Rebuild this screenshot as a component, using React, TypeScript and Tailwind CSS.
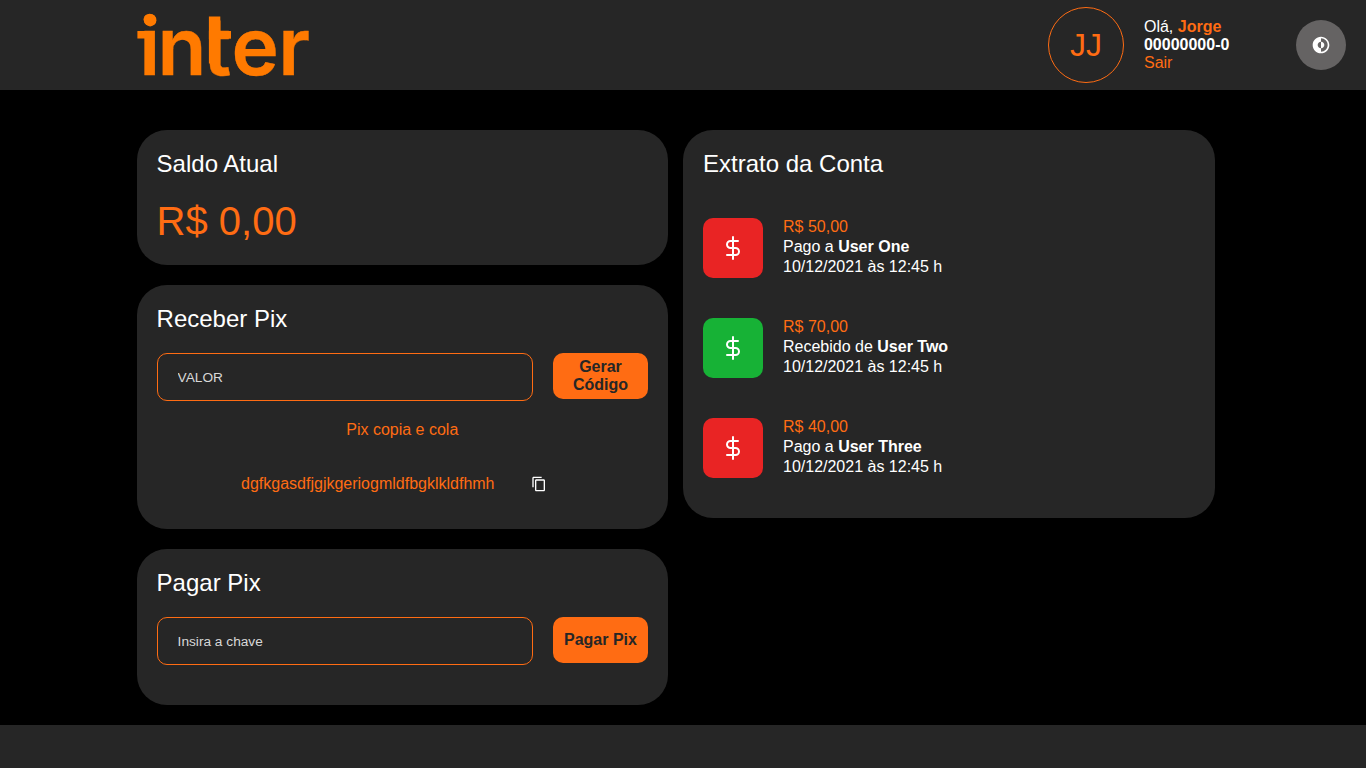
import React from "react";
import { FiDollarSign } from "react-icons/fi";
import { MdContentCopy } from "react-icons/md";
import { CgDarkMode } from "react-icons/cg";

const entries = [
  { value: "R$ 50,00", action: "Pago a", user: "User One", date: "10/12/2021 às 12:45 h", received: false },
  { value: "R$ 70,00", action: "Recebido de", user: "User Two", date: "10/12/2021 às 12:45 h", received: true },
  { value: "R$ 40,00", action: "Pago a", user: "User Three", date: "10/12/2021 às 12:45 h", received: false },
];

function Logo() {
  return (
    <svg width="180" height="90" viewBox="0 0 180 90" fill="#ff7a00" className="overflow-visible">
      <text
        x="2.3 20.4 65.9 94.6 141.2"
        y="75"
        fontFamily="Inter, sans-serif"
        fontWeight="600"
        fontSize="80"
        stroke="#ff7a00"
        strokeWidth="0.4"
      >
        inter
      </text>
      <rect x="66" y="27" width="5.9" height="16" fill="#262626" />
      <rect x="71.9" y="16.5" width="11.4" height="47" />
      <rect x="80" y="31" width="14" height="7.7" />
      <circle cx="13.2" cy="20.2" r="6.2" />
      <rect x="0.4" y="31" width="12" height="7.5" />
    </svg>
  );
}

function Card({ title, className, children }: { title: string; className: string; children: React.ReactNode }) {
  return (
    <section className={`rounded-[30px] bg-[#262626] p-5 ${className}`}>
      <h2 className="text-2xl leading-[27px]">{title}</h2>
      {children}
    </section>
  );
}

function Field({ placeholder, label }: { placeholder: string; label: string }) {
  return (
    <div className="mt-[21px] flex gap-5">
      <input
        placeholder={placeholder}
        className="h-12 min-w-0 flex-1 rounded-[10px] border border-[#ff6c13] bg-transparent px-5 text-[13.7px] placeholder:text-[#d8d8d8]"
      />
      <button className="h-[46px] w-[95px] rounded-[10px] bg-[#ff6c13] text-base leading-[18px] font-bold text-[#262626]">
        {label}
      </button>
    </div>
  );
}

export default function App() {
  return (
    <div className="flex h-screen flex-col overflow-hidden bg-black font-['Liberation_Sans',Arial,sans-serif] text-base text-white">
      <header className="relative h-[90px] shrink-0 bg-[#262626]">
        <div className="mx-auto flex h-full w-4/5 items-center justify-between">
          <Logo />
          <div className="flex items-center gap-5">
            <div className="flex size-[76px] items-center justify-center rounded-full border border-[#ff6c13] text-[32px] leading-none text-[#ff6c13]">
              JJ
            </div>
            <div className="leading-[18px]">
              <p>
                Olá, <strong className="text-[#ff6c13]">Jorge</strong>
              </p>
              <p className="font-bold">00000000-0</p>
              <a className="block text-[#ff6c13]">Sair</a>
            </div>
          </div>
        </div>
        <button className="absolute top-5 right-5 flex size-[50px] items-center justify-center rounded-full bg-[#656363]">
          <CgDarkMode size={20} />
        </button>
      </header>

      <main className="mx-auto grid w-4/5 shrink-0 grid-cols-2 items-start pt-10 pb-5">
        <div className="mr-[15px] flex flex-col gap-5">
          <Card title="Saldo Atual" className="h-[135px]">
            <p className="mt-[21px] text-[40px] leading-[46px] text-[#ff6c13]">R$ 0,00</p>
          </Card>
          <Card title="Receber Pix" className="h-[244px]">
            <Field placeholder="VALOR" label="Gerar Código" />
            <p className="mt-5 text-center leading-[18px] text-[#ff6c13]">Pix copia e cola</p>
            <div className="mt-9 flex items-center justify-center pr-[17px]">
              <span className="leading-[18px] text-[#ff6c13]">dgfkgasdfjgjkgeriogmldfbgklkldfhmh</span>
              <MdContentCopy size={16} className="ml-9" />
            </div>
          </Card>
          <Card title="Pagar Pix" className="h-[156px]">
            <Field placeholder="Insira a chave" label="Pagar Pix" />
          </Card>
        </div>

        <Card title="Extrato da Conta" className="mr-3.5 h-[388px]">
          <ul className="mt-[41px] flex flex-col gap-10">
            {entries.map((e) => (
              <li key={e.user} className="flex h-[60px] gap-5">
                <div
                  className={`flex size-[60px] items-center justify-center rounded-[10px] ${e.received ? "bg-[#17b236]" : "bg-[#e92424]"}`}
                >
                  <FiDollarSign size={24} />
                </div>
                <div className="-mt-px leading-5">
                  <p className="text-[#ff6c13]">{e.value}</p>
                  <p>
                    {e.action} <strong>{e.user}</strong>
                  </p>
                  <p>{e.date}</p>
                </div>
              </li>
            ))}
          </ul>
        </Card>
      </main>

      <footer className="flex-1 bg-[#262626]" />
    </div>
  );
}
